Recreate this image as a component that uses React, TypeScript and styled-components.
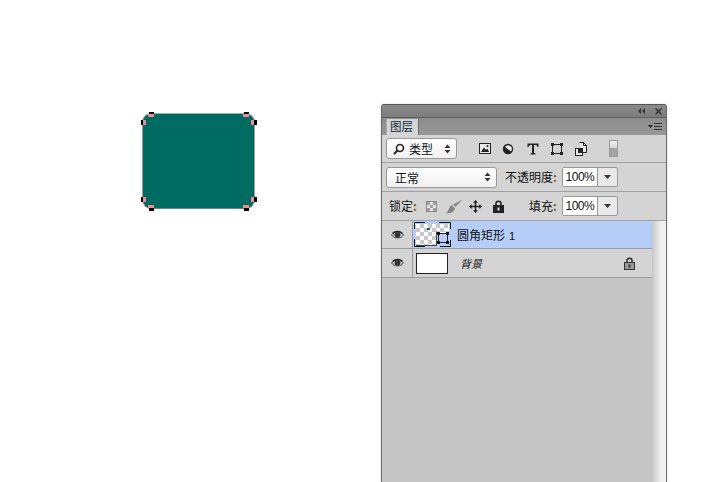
import React from "react";
import styled, { createGlobalStyle } from "styled-components";

const Global = createGlobalStyle`
  html, body { margin: 0; padding: 0; background: #fff; overflow: hidden; }
  #root { width: 714px; height: 482px; }
  * { box-sizing: border-box; }
`;
const CJK = `"Noto Sans CJK SC", "Liberation Sans", sans-serif`;

const Stage = styled.div`
  position: relative; width: 714px; height: 482px; background: #fff; overflow: hidden;
  font-family: ${CJK}; color: #111;
`;
const Shape = styled.div`
  position: absolute; left: 142px; top: 113px; width: 113px; height: 96px;
  background: #006b60; border-radius: 9px;
  border: 1px solid #9a9f9e; border-top-color: #8fb5ae; border-bottom-color: #6f7f7c;
`;
const Handle = styled.div<{ $x: number; $y: number; $w: number; $h: number; $c?: string }>`
  position: absolute; left: ${p => p.$x}px; top: ${p => p.$y}px;
  width: ${p => p.$w}px; height: ${p => p.$h}px; background: ${p => p.$c ?? "#000"};
`;
const Panel = styled.div`
  position: absolute; left: 381px; top: 104px; width: 286px; height: 378px;
  display: flex; flex-direction: column; background: #c6c6c6;
  border-left: 1px solid #6a6a6a; border-right: 1px solid #6a6a6a; border-top: 1px solid #555;
  border-radius: 3px 3px 0 0; box-shadow: 0 0 2px rgba(0, 0, 0, 0.18);
`;
const TitleBar = styled.div`
  height: 13px; flex: none; display: flex; align-items: center; justify-content: flex-end;
  gap: 10px; padding-right: 4px; background: linear-gradient(#8a8a8a, #7d7d7d);
  border-bottom: 1px solid #5f5f5f;
`;
const TabBar = styled.div`
  height: 17px; flex: none; display: flex; align-items: flex-end; justify-content: space-between;
  background: linear-gradient(#8d8d8d, #969696); border-bottom: 1px solid #9a9a9a; padding-right: 4px;
`;
const Tab = styled.div`
  width: 33px; height: 16px; margin-left: 4px; background: #d4d4d4;
  border-right: 1px solid #6a6a6a; border-left: 1px solid #aaa; margin-bottom: -1px;
  padding-left: 3px; font-size: 11.5px; line-height: 15px; color: #12263f;
`;
const MenuIcon = styled.div`
  align-self: center; display: flex;
`;
const Row = styled.div<{ $h: number }>`
  height: ${p => p.$h}px; flex: none; display: flex; align-items: center;
  background: #d4d4d4; border-bottom: 1px solid #a0a0a0; padding-left: 4px;
`;
const SelectBox = styled.div<{ $w: number }>`
  width: ${p => p.$w}px; height: 21px; display: flex; align-items: center; gap: 4px;
  background: linear-gradient(#ffffff, #f1f1f1); border: 1px solid #999; border-radius: 3px;
  padding: 0 5px 0 8px; font-size: 12px; color: #111;
`;
const SelectText = styled.span`flex: 1; line-height: 19px;`;
const ToolGroup = styled.div`
  display: flex; align-items: center; gap: 7px; margin-left: 22px;
`;
const ToggleTrack = styled.div`
  width: 9px; height: 17px; margin-left: 22px; border: 1px solid #9a9a9a;
  background: linear-gradient(#f0f0f0 0, #d8d8d8 45%, #a4a4a4 50%, #a4a4a4 100%);
`;
const Label = styled.span<{ $ml?: number }>`
  font-size: 12px; line-height: 16px; margin-left: ${p => p.$ml ?? 0}px; color: #111; white-space: nowrap;
`;
const Colon = styled.span`color: #8a5a10; font-weight: 700;`;
const Percent = styled.div`
  width: 56px; height: 20px; display: flex; margin-left: 5px;
  border: 1px solid #999; border-radius: 2px; background: #e9e9e9;
`;
const PercentValue = styled.div`
  width: 35px; background: #fff; border-right: 1px solid #999; letter-spacing: -0.5px;
  font: 12px/18px "Liberation Sans", sans-serif; color: #111; text-align: center;
`;
const PercentArrow = styled.div`
  flex: 1; display: flex; align-items: center; justify-content: center;
`;
const LockIcons = styled.div`
  display: flex; align-items: center; gap: 6px; margin-left: 9px;
`;
const Body = styled.div`flex: 1; display: flex; min-height: 0;`;
const LayerList = styled.div`flex: 1; display: flex; flex-direction: column; background: #c6c6c6;`;
const LayerRow = styled.div<{ $active?: boolean; $h: number }>`
  height: ${p => p.$h}px; display: flex; align-items: center; flex: none;
  background: ${p => (p.$active ? "#b5cdf7" : "#d4d4d4")};
  border-bottom: 1px solid #9d9d9d;
`;
const EyeCell = styled.div`
  width: 31px; height: 100%; display: flex; align-items: center; justify-content: center;
  border-right: 1px solid #9d9d9d; background: #d4d4d4;
`;
const Thumb = styled.div`
  width: 32px; height: 21px; margin-left: 3px; background: #fff; border: 1px solid #222; flex: none;
`;
const ThumbWrap = styled.div`
  display: flex; width: 37px; height: 25px; margin-left: 1px; flex: none;
`;
const LayerName = styled.span<{ $italic?: boolean; $ml: number }>`
  margin-left: ${p => p.$ml}px; flex: 1; color: #111; white-space: nowrap;
  font-size: ${p => (p.$italic ? 11 : 12)}px; font-style: ${p => (p.$italic ? "italic" : "normal")};
`;
const Num = styled.span`font: 11px "Liberation Sans", sans-serif; margin-left: 4px;`;
const RowLock = styled.div`margin-right: 17px; display: flex;`;
const ScrollTrack = styled.div`
  width: 14px; flex: none;
  background: linear-gradient(90deg, #c6c6c6 0, #dcdcdc 30%, #f2f2f2 70%, #f0f0f0 100%);
`;

const LockGlyph = ({ c = "#222", fill = "#222" }: { c?: string; fill?: string }) => (
  <svg width="11" height="13" viewBox="0 0 11 13">
    <path d="M3 6V3.8a2.5 2.5 0 0 1 5 0V6" fill="none" stroke={c} strokeWidth="1.6" />
    <rect x="0.5" y="5.5" width="10" height="7" fill={fill} stroke={c} />
    <rect x="4.5" y="7.5" width="2" height="3" fill={c === fill ? "#e0e0e0" : c} />
  </svg>
);
const Eye = () => (
  <svg width="13" height="10" viewBox="0 0 13 10">
    <path d="M0.5 5C3 1 10 1 12.5 5C10 9 3 9 0.5 5Z" fill="#bdbdbd" stroke="#555" strokeWidth="1" />
    <circle cx="6.5" cy="5" r="2.8" fill="#333" />
    <path d="M1.5 3.5C4 0.8 9 0.8 11.5 3.5" fill="none" stroke="#222" strokeWidth="1.3" />
  </svg>
);
const Updown = () => (
  <svg width="7" height="10" viewBox="0 0 7 10"><path d="M3.5 0.5L6.5 4H0.5ZM3.5 9.5L0.5 6H6.5Z" fill="#333" /></svg>
);
const Caret = () => (
  <svg width="7" height="4" viewBox="0 0 7 4"><path d="M0 0H7L3.5 4Z" fill="#333" /></svg>
);

const cells: [number, number][] = [];
for (let r = 0; r < 6; r++) for (let c = 0; c < 8; c++) cells.push([c, r]);

const pink = "#f08c98";
const handles = [
  [6, -2, 5, 2, ""], [5, 0, 6, 3, pink],
  [101, -2, 5, 2, ""], [100, 0, 6, 3, pink],
  [-2, 6, 2, 5, ""], [0, 6, 3, 5, pink],
  [111, 6, 3, 5, ""], [108, 6, 3, 5, pink],
  [-2, 83, 2, 5, ""], [0, 83, 3, 5, pink],
  [111, 83, 3, 5, ""], [108, 83, 3, 5, pink],
  [6, 94, 5, 3, ""], [5, 91, 6, 3, pink],
  [101, 94, 5, 3, ""], [100, 91, 6, 3, pink],
] as const;

const App = () => (
  <Stage>
    <Global />
    <Shape>
      {handles.map(([x, y, w, h, c], i) => (
        <Handle key={i} $x={x} $y={y} $w={w} $h={h} $c={c || undefined} />
      ))}
    </Shape>
    <Panel>
      <TitleBar>
        <svg width="7" height="6" viewBox="0 0 7 6"><path d="M3 0V6L0 3ZM7 0V6L4 3Z" fill="#333" /></svg>
        <svg width="7" height="7" viewBox="0 0 7 7"><path d="M0.5 0.5L6.5 6.5M6.5 0.5L0.5 6.5" stroke="#333" strokeWidth="1.5" /></svg>
      </TitleBar>
      <TabBar>
        <Tab>图层</Tab>
        <MenuIcon>
          <svg width="14" height="7" viewBox="0 0 14 7">
            <path d="M0 2H5L2.5 5Z" fill="#222" />
            <path d="M6 0.5H14M6 3.5H14M6 6.5H14" stroke="#333" strokeWidth="1" />
          </svg>
        </MenuIcon>
      </TabBar>
      <Row $h={28}>
        <SelectBox $w={71}>
          <svg width="12" height="12" viewBox="0 0 12 12" style={{ marginLeft: -2 }}>
            <circle cx="7" cy="5" r="3.5" fill="none" stroke="#222" strokeWidth="1.6" />
            <path d="M4.5 7.5L1 11" stroke="#222" strokeWidth="2" />
          </svg>
          <SelectText>类型</SelectText>
          <Updown />
        </SelectBox>
        <ToolGroup>
          <svg width="12" height="11" viewBox="0 0 12 11">
            <rect x="0.5" y="0.5" width="11" height="10" fill="#e8e8e8" stroke="#222" />
            <path d="M2 9L5 4.5L7 7L8.5 5.5L10 9Z" fill="#222" />
            <circle cx="8.5" cy="3" r="1.1" fill="#222" />
          </svg>
          <svg width="12" height="12" viewBox="0 0 12 12" style={{ marginLeft: 4 }}>
            <circle cx="6" cy="6" r="5.2" fill="#222" />
            <path d="M6 2.2A3.8 3.8 0 0 1 9 8.4L3 4A3.8 3.8 0 0 1 6 2.2Z" fill="#e8e8e8" />
          </svg>
          <svg width="12" height="12" viewBox="0 0 12 12" style={{ marginLeft: 6 }}>
            <path d="M0.5 0.5H11.5V4H10.5C10.3 2.5 9.5 2 8 2H7V10L8.5 10.5V11.5H3.5V10.5L5 10V2H4C2.5 2 1.7 2.5 1.5 4H0.5Z" fill="#222" />
          </svg>
          <svg width="12" height="12" viewBox="0 0 12 12" style={{ marginLeft: 5 }}>
            <rect x="1.5" y="1.5" width="9" height="9" fill="none" stroke="#222" />
            <rect x="0" y="0" width="3" height="3" fill="#222" /><rect x="9" y="0" width="3" height="3" fill="#222" />
            <rect x="0" y="9" width="3" height="3" fill="#222" /><rect x="9" y="9" width="3" height="3" fill="#222" />
          </svg>
          <svg width="12" height="14" viewBox="0 0 12 14" style={{ marginLeft: 5 }}>
            <path d="M4.5 0.5H8.5L11.5 3.5V10.5H8" fill="#e8e8e8" stroke="#222" />
            <path d="M8.5 0.5V3.5H11.5" fill="none" stroke="#222" />
            <rect x="0.5" y="6.5" width="7" height="7" fill="#e8e8e8" stroke="#222" />
            <rect x="3" y="6" width="5" height="5" fill="#222" />
          </svg>
        </ToolGroup>
        <ToggleTrack />
      </Row>
      <Row $h={29}>
        <SelectBox $w={111}>
          <SelectText>正常</SelectText>
          <Updown />
        </SelectBox>
        <Label $ml={8}>不透明度<Colon>:</Colon></Label>
        <Percent>
          <PercentValue>100%</PercentValue>
          <PercentArrow><Caret /></PercentArrow>
        </Percent>
      </Row>
      <Row $h={29}>
        <Label $ml={3}>锁定<Colon>:</Colon></Label>
        <LockIcons>
          <svg width="11" height="11" viewBox="0 0 11 11">
            <rect x="0.5" y="0.5" width="10" height="10" fill="#e4e4e4" stroke="#8a8a8a" />
            <path d="M1 1H4V4H1ZM7 1H10V4H7ZM4 4H7V7H4ZM1 7H4V10H1ZM7 7H10V10H7Z" fill="#a0a0a0" />
          </svg>
          <svg width="17" height="15" viewBox="0 0 17 15" style={{ marginLeft: 3 }}>
            <path d="M16.5 0.5L9.5 8L7 5.5Z" fill="#8a8a8a" />
            <path d="M5.5 6L9 9.5C8 13 4 15 0 14C3 12.5 2.5 8 5.5 6Z" fill="#858585" />
          </svg>
          <svg width="13" height="13" viewBox="0 0 13 13">
            <path d="M6.5 0L9 2.7H7.3V5.7H10.3V4L13 6.5L10.3 9V7.3H7.3V10.3H9L6.5 13L4 10.3H5.7V7.3H2.7V9L0 6.5L2.7 4V5.7H5.7V2.7H4Z" fill="#222" />
          </svg>
          <span style={{ display: "flex", marginLeft: 5 }}><LockGlyph /></span>
        </LockIcons>
        <Label $ml={25}>填充<Colon>:</Colon></Label>
        <Percent>
          <PercentValue>100%</PercentValue>
          <PercentArrow><Caret /></PercentArrow>
        </Percent>
      </Row>
      <Body>
        <LayerList>
          <LayerRow $active $h={28}>
            <EyeCell><Eye /></EyeCell>
            <ThumbWrap>
              <svg width="37" height="25" viewBox="0 0 37 25">
                <rect x="2" y="2" width="33" height="9" fill="#fff" />
                <rect x="2" y="11" width="20" height="12" fill="#fff" />
                {cells.map(([c, r]) => {
                  if ((c + r) % 2 === 0) return null;
                  const x = 2 + c * 4, y = 2 + r * 4;
                  if (x >= 22 && y >= 10) return null;
                  return <rect key={`${c}-${r}`} x={x} y={y} width="4" height="4" fill="#c8c8c8" />;
                })}
                <rect x="13" y="6" width="3" height="2" fill="#006b60" />
                <path d="M0.5 7V0.5H11M25 0.5H36.5V7M0.5 17V24.5H11M26 24.5H36.5V18" fill="none" stroke="#111" />
                <path d="M22.5 9V23.5H2" fill="none" stroke="#444" />
                <path d="M22.5 9.5H35" stroke="#b5cdf7" />
                <rect x="24.5" y="11.5" width="9" height="9" fill="#b5cdf7" stroke="#223" />
                <rect x="23" y="10" width="3" height="3" fill="#111" /><rect x="32" y="10" width="3" height="3" fill="#111" />
                <rect x="23" y="19" width="3" height="3" fill="#111" /><rect x="32" y="19" width="3" height="3" fill="#111" />
              </svg>
            </ThumbWrap>
            <LayerName $ml={6}>圆角矩形<Num>1</Num></LayerName>
          </LayerRow>
          <LayerRow $h={29}>
            <EyeCell><Eye /></EyeCell>
            <Thumb />
            <LayerName $italic $ml={12}>背景</LayerName>
            <RowLock><LockGlyph c="#333" fill="#9a9a9a" /></RowLock>
          </LayerRow>
        </LayerList>
        <ScrollTrack />
      </Body>
    </Panel>
  </Stage>
);

export default App;
